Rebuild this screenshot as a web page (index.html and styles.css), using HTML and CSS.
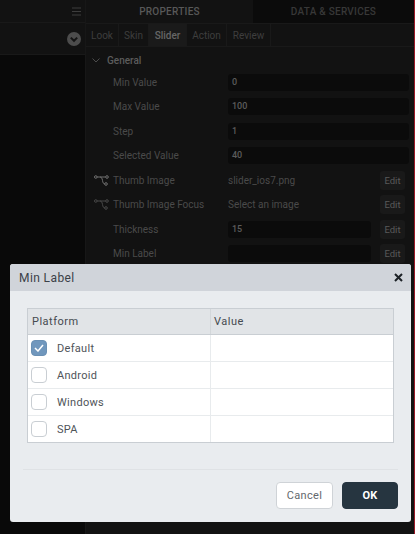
FILE: index.html

```html
<!DOCTYPE html>
<html>

<head>
<title>Min Label</title>
<meta charset="UTF-8">
<link rel="stylesheet" href="styles.css">
</head>

<body>

<div class="app">
  <div class="side">
    <div class="side-top">
      <svg class="burger" width="9" height="9" viewBox="0 0 9 9"><path d="M0 1h9M0 4.500h9M0 8h9" stroke="#3d3d3d" stroke-width="1"/></svg>
    </div>
    <div class="side-sub">
      <svg class="chev" width="14" height="14" viewBox="0 0 14 14"><circle cx="7" cy="7" r="7" fill="#4c4c4c"/><path d="M3.800 5.600 7 8.800l3.200-3.200" fill="none" stroke="#141414" stroke-width="2"/></svg>
    </div>
  </div>

  <div class="main">
    <div class="top-tabs">
      <div class="top-tab on">PROPERTIES</div>
      <div class="top-tab">DATA &amp; SERVICES</div>
    </div>
    <div class="tabs">
      <div class="tab t-look">Look</div>
      <div class="tab t-skin">Skin</div>
      <div class="tab t-slider on">Slider</div>
      <div class="tab t-action">Action</div>
      <div class="tab t-review">Review</div>
    </div>

    <div class="group">
      <svg width="8" height="5" viewBox="0 0 8 5"><path d="M.5.500 4 4 7.500.500" fill="none" stroke="#4c4c4c" stroke-width="1"/></svg>
      <span>General</span>
    </div>

    <div class="rows">
      <div class="row"><span class="ico"></span><label>Min Value</label><div class="inp wide">0</div></div>
      <div class="row"><span class="ico"></span><label>Max Value</label><div class="inp wide">100</div></div>
      <div class="row"><span class="ico"></span><label>Step</label><div class="inp wide">1</div></div>
      <div class="row"><span class="ico"></span><label>Selected Value</label><div class="inp wide">40</div></div>
      <div class="row">
        <span class="ico"><svg width="15" height="11" viewBox="0 0 15 11"><g fill="none" stroke="#707070" stroke-width="1"><circle cx="1.800" cy="2" r="1.300"/><circle cx="13" cy="2" r="1.300"/><circle cx="12" cy="9" r="1.300"/><path d="M3 2h8.700M6 2c1.500 0 2 1 2.500 3.500.3 2 1 3.500 2.300 3.500"/></g></svg></span>
        <label>Thumb Image</label><div class="val">slider_ios7.png</div><div class="edit">Edit</div>
      </div>
      <div class="row">
        <span class="ico"><svg width="15" height="11" viewBox="0 0 15 11"><g fill="none" stroke="#484848" stroke-width="1"><circle cx="1.800" cy="2" r="1.300"/><circle cx="13" cy="2" r="1.300"/><circle cx="12" cy="9" r="1.300"/><path d="M3 2h8.700M6 2c1.500 0 2 1 2.500 3.500.3 2 1 3.500 2.300 3.500"/></g></svg></span>
        <label>Thumb Image Focus</label><div class="val">Select an image</div><div class="edit">Edit</div>
      </div>
      <div class="row"><span class="ico"></span><label>Thickness</label><div class="inp">15</div><div class="edit">Edit</div></div>
      <div class="row"><span class="ico"></span><label>Min Label</label><div class="inp"></div><div class="edit">Edit</div></div>
    </div>
  </div>
</div>

<div class="dialog">
  <div class="dlg-head">
    <span>Min Label</span>
    <svg width="9" height="9" viewBox="0 0 9 9"><path d="M1 1l7 7M8 1 1 8" stroke="#1c2126" stroke-width="2"/></svg>
  </div>
  <div class="dlg-body">
    <div class="table">
      <div class="tr th"><div class="c1">Platform</div><div class="c2">Value</div></div>
      <div class="tr">
        <div class="c1"><span class="box checked"><svg width="10" height="8" viewBox="0 0 10 8"><path d="M1 4l3 3 5-6" fill="none" stroke="#fff" stroke-width="1.500"/></svg></span>Default</div>
        <div class="c2"></div>
      </div>
      <div class="tr"><div class="c1"><span class="box"></span>Android</div><div class="c2"></div></div>
      <div class="tr"><div class="c1"><span class="box"></span>Windows</div><div class="c2"></div></div>
      <div class="tr"><div class="c1"><span class="box"></span>SPA</div><div class="c2"></div></div>
    </div>
    <div class="dlg-foot">
      <div class="btn">Cancel</div>
      <div class="btn ok">OK</div>
    </div>
  </div>
</div>

</body>
</html>
```

FILE: styles.css

```css
html,body { margin: 0px; padding: 0px; width: 100%; height: 100%; background-color: #000;
  font-family: Roboto, "Liberation Sans", Arial, sans-serif;
  font-size: 11px;
  overflow: hidden;
}

.app {
  display: flex;
  width: 415px;
  height: 534px;
  box-sizing: border-box;
  background: #121212;
  border-right: 1px solid #9a1a28;
}

.side {
  width: 86px;
  flex: none;
  background: #090909;
  border-right: 1px solid #171717;
  box-sizing: border-box;
}
.side-top {
  height: 23px;
  background: #121212;
  border-bottom: 1px solid #191919;
  box-sizing: border-box;
  display: flex;
  align-items: center;
  justify-content: flex-end;
  padding-right: 4px;
}
.side-sub {
  height: 32px;
  background: #121212;
  border-bottom: 1px solid #191919;
  box-sizing: border-box;
  display: flex;
  align-items: center;
  justify-content: flex-end;
  padding-right: 4px;
}

.main { flex: 1; min-width: 0; }

.top-tabs { display: flex; height: 23px; }
.top-tab {
  flex: 1;
  background: #0b0b0b;
  color: #383838;
  font-weight: 500;
  font-size: 10px;
  letter-spacing: .25px;
  display: flex;
  align-items: center;
  justify-content: center;
}
.top-tab.on { flex: none; width: 167px; background: #121212; color: #585858; }

.tabs {
  display: flex;
  height: 24px;
  border-top: 1px solid #191919;
  border-bottom: 1px solid #191919;
  box-sizing: border-box;
  font-size: 10px;
}
.tab {
  color: #3e3e3e;
  border-right: 1px solid #191919;
  box-sizing: border-box;
  display: flex;
  align-items: center;
  justify-content: center;
}
.t-look { width: 33px; }
.t-skin { width: 30px; }
.t-slider { width: 38px; }
.t-action { width: 40px; }
.t-review { width: 44px; }
.tab.on { background: #1a1a1a; color: #666; font-weight: 500; }

.group {
  display: flex;
  align-items: center;
  height: 20px;
  padding-top: 3px;
  padding-left: 6px;
  gap: 7px;
  color: #5c5c5c;
  font-size: 10px;
  font-weight: 500;
}

.rows {
  display: grid;
  grid-auto-rows: 24.5px;
}
.row {
  display: flex;
  align-items: center;
  color: #4a4a4a;
  font-size: 10px;
}
.ico { width: 27px; flex: none; display: flex; justify-content: center; padding-left: 3px; box-sizing: border-box; }
label { width: 115px; flex: none; white-space: nowrap; }
.inp {
  width: 143px;
  height: 17px;
  line-height: 17px;
  padding-left: 4px;
  box-sizing: border-box;
  background: #0b0b0b;
  border-radius: 3px;
  color: #5c5c5c;
  font-size: 9px;
  font-weight: 500;
}
.inp.wide { width: 181px; }
.val { width: 152px; flex: none; }
.edit {
  width: 25px;
  height: 19px;
  margin-left: 9px;
  background: #191919;
  border-radius: 3px;
  color: #5a5a5a;
  font-size: 9.5px;
  display: flex;
  align-items: center;
  justify-content: center;
}
.val + .edit { margin-left: 0; }

.dialog {
  position: absolute;
  left: 10px;
  top: 264px;
  width: 401px;
  height: 258px;
  background: #e9ecef;
  border-radius: 3px;
  overflow: hidden;
}
.dlg-head {
  height: 27px;
  background: #d0d4da;
  display: flex;
  align-items: center;
  justify-content: space-between;
  padding: 0 8px 0 9px;
  color: #3b4148;
  font-size: 12px;
  letter-spacing: .4px;
}
.dlg-body { padding: 17px 13px 0; }

.table {
  width: 367px;
  margin-left: 4px;
  background: #fff;
  border: 1px solid #c9ced3;
  box-sizing: border-box;
  color: #4f5459;
  font-size: 11px;
  letter-spacing: .3px;
}
.tr {
  display: flex;
  height: 27px;
  border-bottom: 1px solid #e8ebed;
  box-sizing: border-box;
}
.tr:last-child { border-bottom: none; height: 26px; }
.tr.th {
  height: 26px;
  background: #e1e4e7;
  border-bottom: 1px solid #c9ced3;
  color: #454a50;
  letter-spacing: .5px;
}
.c1 {
  width: 183px;
  flex: none;
  display: flex;
  align-items: center;
  padding-left: 4px;
  box-sizing: border-box;
  border-right: 1px solid #e8ebed;
}
.th .c1 { border-right-color: #d3d7da; }
.c2 { flex: 1; padding-left: 3px; display: flex; align-items: center; }

.box {
  width: 16px;
  height: 16px;
  margin-left: -1px;
  margin-right: 10px;
  border: 1.5px solid #c9ced3;
  border-radius: 4px;
  background: #fff;
  box-sizing: border-box;
  display: flex;
  align-items: center;
  justify-content: center;
}
.box.checked { background: #7097bd; border-color: #6a90b4; }

.dlg-foot {
  margin-top: 26px;
  border-top: 1px solid #dfe2e5;
  padding-top: 12px;
  display: flex;
  justify-content: flex-end;
  gap: 9px;
}
.btn {
  width: 57px;
  height: 27px;
  background: #fff;
  border: 1px solid #cfd3d7;
  border-radius: 4px;
  box-sizing: border-box;
  color: #63686d;
  letter-spacing: .3px;
  display: flex;
  align-items: center;
  justify-content: center;
}
.btn.ok {
  width: 56px;
  background: #263540;
  border-color: #263540;
  color: #fff;
  font-weight: 700;
}
```
